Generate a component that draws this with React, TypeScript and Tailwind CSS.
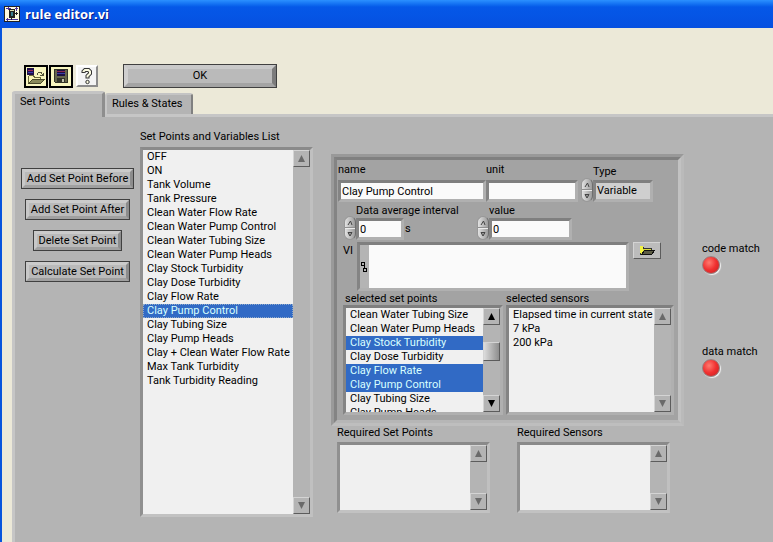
import { useState } from 'react'
import type { ReactNode } from 'react'

const setPoints = [
  'OFF',
  'ON',
  'Tank Volume',
  'Tank Pressure',
  'Clean Water Flow Rate',
  'Clean Water Pump Control',
  'Clean Water Tubing Size',
  'Clean Water Pump Heads',
  'Clay Stock Turbidity',
  'Clay Dose Turbidity',
  'Clay Flow Rate',
  'Clay Pump Control',
  'Clay Tubing Size',
  'Clay Pump Heads',
  'Clay + Clean Water Flow Rate',
  'Max Tank Turbidity',
  'Tank Turbidity Reading',
]

const visibleSetPoints = setPoints.slice(6, 14)
const sensors = ['Elapsed time in current state', '7 kPa', '200 kPa']

// recessed LabVIEW frame: dark on the top and left, light on the bottom and right
const sunken = 'border-3 border-t-[#8a8a8a] border-l-[#909090] border-r-[#c0c0c0] border-b-[#c2c2c2]'
const sunkenDark = 'border-3 border-t-[#7f7f7f] border-l-[#848484] border-r-[#b0b0b0] border-b-[#b0b0b0]'
const raised = 'border border-t-[#d4d4d4] border-l-[#d4d4d4] border-r-[#5c5c5c] border-b-[#5c5c5c]'

function ScrollButton({ dir, active }: { dir: 'up' | 'down'; active?: boolean }) {
  return (
    <button
      aria-label={`Scroll ${dir}`}
      className={`flex h-[17px] w-[17px] shrink-0 items-center justify-center bg-[#b4b4b4] ${raised}`}
    >
      <svg width="7" height="7" viewBox="0 0 7 7" className={active ? 'fill-black' : 'fill-[#6a6a6a]'}>
        {dir === 'up' ? <path d="M3.500 0L7 7H0Z" /> : <path d="M0 0H7L3.500 7Z" />}
      </svg>
    </button>
  )
}

type ListBoxProps = {
  label: string
  items?: string[]
  selected?: string[]
  focused?: boolean
  thumb?: boolean
  dark?: boolean
  className: string
  onSelect?: (item: string) => void
}

function ListBox({ label, items = [], selected = [], focused, thumb, dark, className, onSelect }: ListBoxProps) {
  return (
    <div className={`flex ${dark ? sunkenDark : sunken} ${className}`}>
      <ul role="listbox" aria-label={label} className="min-w-0 flex-1 overflow-hidden bg-[#f0f0f0]">
        {items.map((item) => {
          const on = selected.includes(item)
          return (
            <li
              key={item}
              role="option"
              aria-selected={on}
              onClick={() => onSelect?.(item)}
              className={`h-[14px] pl-1 leading-[14px] whitespace-nowrap ${
                on ? 'bg-[#316ac5] text-[#d8ffff]' : ''
              } ${on && focused ? 'outline outline-dotted -outline-offset-1 outline-[#8fa9c9]' : ''}`}
            >
              {item}
            </li>
          )
        })}
      </ul>
      <div className="flex w-[17px] flex-col bg-[#b4b4b4]">
        <ScrollButton dir="up" active={thumb} />
        <div className="flex-1">
          {thumb && (
            <div className={`mt-[17px] h-[19px] bg-linear-to-r from-[#dcdcdc] to-[#8e8e8e] ${raised}`} />
          )}
        </div>
        <ScrollButton dir="down" active={thumb} />
      </div>
    </div>
  )
}

function Spinner({ label }: { label: string }) {
  return (
    <div className="flex h-6 w-3 shrink-0 flex-col items-center justify-center rounded-full border border-[#989898] border-r-[#6e6e6e] bg-linear-to-r from-[#e2e2e2] to-[#9c9c9c]">
      <button aria-label={`Increase ${label}`} className="flex h-[10px] w-full items-center justify-center border-b border-[#909090]">
        <svg width="6" height="6" viewBox="0 0 6 6" className="fill-none stroke-[#444]">
          <path d="M1 5L3.500 1L5 5" />
        </svg>
      </button>
      <button aria-label={`Decrease ${label}`} className="flex h-[10px] w-full items-center justify-center border-t border-[#ececec]">
        <svg width="6" height="6" viewBox="0 0 6 6" className="fill-[#999] stroke-[#444]">
          <path d="M1 1.500H5L3 5Z" />
        </svg>
      </button>
    </div>
  )
}

function GrayButton({ children }: { children: ReactNode }) {
  return (
    <button className="border border-[#404040] bg-[#bababa]">
      <span className="block border-3 border-t-[#cbcbcb] border-l-[#c8c8c8] border-r-[#8c8c8c] border-b-[#a0a0a0] px-0.5 leading-[13px] whitespace-nowrap">
        {children}
      </span>
    </button>
  )
}

function Led({ label }: { label: string }) {
  return (
    <div>
      <div className="leading-[14px]">{label}</div>
      <div
        role="img"
        aria-label={`${label}: off`}
        className="h-[18px] w-[18px] rounded-full border border-[#9a8080] bg-radial-[at_38%_35%] from-[#ff7a70] via-[#f03030] to-[#c02020] shadow-[1px_1px_1px_#f4f4f4]"
      />
    </div>
  )
}

function AppIcon() {
  return (
    <svg width="16" height="16" viewBox="0 0 16 16" shapeRendering="crispEdges">
      <path fill="#fffbe0" stroke="#222" d="M0.500 0.500H15.500V15.500H0.500Z" />
      <path fill="none" stroke="#4a2f9c" d="M2 2.500H7M4.500 1V4M11 2.500H14M12.500 1V5M2 13.500H14M3.500 12V15" />
      <path fill="#222" d="M5 3H11V12H5Z" />
      <path fill="#e0e0b0" d="M6 4H10V5H6Z" />
      <path fill="#3c7f90" d="M7 6H9V10H7Z" />
      <path stroke="#222" d="M11 7.500H14M12.500 6V9M7.500 12V14" />
    </svg>
  )
}

function LoadIcon() {
  return (
    <svg width="20" height="19" viewBox="0 0 20 19" shapeRendering="crispEdges">
      <path fill="#20104c" d="M1 1H8V8H1Z" />
      <path stroke="#a02858" d="M2 3.500H7" />
      <path stroke="#3c3cb0" d="M2 5.500H7" />
      <path stroke="#333" d="M4.500 8V9" />
      <path fill="#f8f5b4" stroke="#6a6a3a" d="M2.500 16.500V9.500L3.500 8.500H7.500L8.500 10.500H14.500V12.500" />
      <path fill="#8a8a5c" stroke="#4a4a2c" d="M2.500 16.500L6.500 12.500H18.500L14.500 16.500Z" />
      <path fill="none" stroke="#55553a" d="M11 7.500L12.500 5.500H15.500L16.500 8.500M14 8.500H17.500M17.500 6V9" />
    </svg>
  )
}

function SaveIcon() {
  return (
    <svg width="20" height="19" viewBox="0 0 20 19" shapeRendering="crispEdges">
      <path fill="#66664c" stroke="#33332a" d="M3.500 2.500H16.500V15.500H4.500L3.500 14.500Z" />
      <path fill="#1c1040" d="M6 3H14V9H6Z" />
      <path stroke="#8c2850" d="M6 4.500H14" />
      <path stroke="#3c3ca8" d="M6 6.500H14" />
      <path fill="#33332a" d="M6 11H14V15H6Z" />
      <path fill="#c4c4b0" d="M11 12H13V15H11Z" />
    </svg>
  )
}

function HelpIcon() {
  return (
    <svg width="14" height="18" viewBox="0 0 14 18" fill="none">
      <path stroke="#333" strokeWidth="4" d="M3.500 6V4.500L5 3H8.500L10 4.500V6.500L7.500 9V11.500" />
      <path stroke="#fafae0" strokeWidth="2" d="M3.500 5V4.500L5 3H8.500L10 4.500V6.500L7.500 9V10.500" />
      <circle cx="7.500" cy="15" r="1.700" fill="#fafae0" stroke="#333" />
    </svg>
  )
}

function FolderIcon() {
  return (
    <svg width="16" height="11" viewBox="0 0 16 11" shapeRendering="crispEdges">
      <path fill="#d8d840" stroke="#333" d="M1.500 9.500V1.500H3.500L4.500 3.500H12.500V5.500" />
      <path fill="#f4f440" d="M1 1H4V8H1Z" />
      <path fill="#5c5c44" stroke="#111" d="M2.500 9.500L5.500 5.500H15.500L12.500 9.500Z" />
    </svg>
  )
}

export default function App() {
  const [tab, setTab] = useState('points')
  const [current, setCurrent] = useState('Clay Pump Control')
  const [picked, setPicked] = useState(['Clay Stock Turbidity', 'Clay Flow Rate', 'Clay Pump Control'])

  const togglePicked = (item: string) =>
    setPicked((p) => (p.includes(item) ? p.filter((i) => i !== item) : [...p, item]))

  return (
    <div className="flex min-h-screen flex-col overflow-hidden bg-[#ece9d8] font-['Roboto',sans-serif] text-[11px] text-black">
      <header className="flex h-7 shrink-0 items-center gap-[5px] bg-linear-to-b from-[#2b90ff] via-[#0558e8] via-25% to-[#0650e0] pl-1 text-white">
        <AppIcon />
        <h1 className="pt-0.5 font-['Open_Sans',sans-serif] text-[13px] font-bold [text-shadow:1px_1px_#0a1883]">rule editor.vi</h1>
      </header>

      <main className="flex flex-1 flex-col border-l-2 border-[#0855dd] pt-9 pl-[10px]">
        <div className="flex items-center gap-px pl-3">
          <button aria-label="Load" className="border-2 border-black bg-[#f8f6c0]">
            <LoadIcon />
          </button>
          <button aria-label="Save" className="border-2 border-black bg-[#f8f6c0]">
            <SaveIcon />
          </button>
          <button aria-label="Help" className="ml-0.5 flex h-[22px] w-[22px] items-center justify-center border-2 border-t-white border-l-white border-r-[#8c8c8c] border-b-[#8c8c8c] bg-[#f4f4f4]">
            <HelpIcon />
          </button>
          <button className="ml-6 w-[154px] border border-[#404040] bg-[#bababa]">
            <span className="block border-4 border-t-[#c9c9c9] border-l-[#cfcfcf] border-r-[#7c7c7c] border-b-[#a4a4a4] leading-[14px]">OK</span>
          </button>
        </div>

        <div role="tablist" className="mt-[3px] flex h-[23px] items-end">
          <button
            role="tab"
            aria-selected={tab === 'points'}
            onClick={() => setTab('points')}
            className="relative z-10 -mb-[3px] flex h-[26px] w-[93px] items-start rounded-t-[3px] border-3 border-b-0 border-t-[#c4c4c4] border-l-[#c6c6c6] border-r-[#8e8e8e] bg-[#b4b4b4] pl-[5px] leading-[16px]"
          >
            Set Points
          </button>
          <button
            role="tab"
            aria-selected={tab === 'rules'}
            onClick={() => setTab('rules')}
            className="flex h-[21px] w-[88px] items-start rounded-t-[3px] border-2 border-b-0 border-t-[#c4c4c4] border-l-[#c6c6c6] border-r-[#808080] bg-[#b4b4b4] pl-[5px] leading-[18px] whitespace-nowrap"
          >
            Rules &amp; States
          </button>
        </div>

        <section className="flex flex-1 items-start border-t-3 border-l-3 border-[#c6c6c6] bg-[#b4b4b4] pt-[14px] pb-6">
          <div className="mt-[37px] ml-[7px] flex w-[111px] shrink-0 flex-col items-center gap-[10px]">
            <GrayButton>Add Set Point Before</GrayButton>
            <GrayButton>Add Set Point After</GrayButton>
            <GrayButton>Delete Set Point</GrayButton>
            <GrayButton>Calculate Set Point</GrayButton>
          </div>

          <div className="ml-[7px] w-[173px] shrink-0">
            <div className="h-4 leading-[12px]">Set Points and Variables List</div>
            <ListBox
              label="Set Points and Variables List"
              items={setPoints}
              selected={[current]}
              focused
              className="h-[370px]"
              onSelect={setCurrent}
            />
          </div>

          <div className="mt-[23px] ml-[18px] w-[353px] shrink-0">
            <div className="border-3 border-t-[#999999] border-l-[#9a9a9a] border-r-[#bababa] border-b-[#bebebe]">
              <div className="border-3 border-t-[#808080] border-l-[#848484] border-r-[#c2c2c2] border-b-[#b6b6b6] bg-[#a3a3a3] pt-1 pb-[5px]">
                <div className="flex items-end pl-px">
                  <div>
                    <label htmlFor="name" className="block h-4 leading-[12px]">name</label>
                    <input id="name" defaultValue="Clay Pump Control" className={`block h-[22px] w-[148px] bg-[#fafafa] pl-px outline-none ${sunkenDark}`} />
                  </div>
                  <div>
                    <label htmlFor="unit" className="block h-4 leading-[12px]">unit</label>
                    <input id="unit" className={`block h-[22px] w-[92px] bg-[#fafafa] pl-px outline-none ${sunkenDark}`} />
                  </div>
                  <div className="ml-[3px] flex items-end">
                    <Spinner label="type" />
                    <div>
                      <label htmlFor="type" className="block h-[14px] leading-[12px]">Type</label>
                      <select id="type" className={`block h-[22px] w-[60px] appearance-none bg-[#cfcfcf] pl-px outline-none ${sunkenDark}`}>
                        <option>Variable</option>
                        <option>Constant</option>
                      </select>
                    </div>
                  </div>
                </div>

                <div className="mt-[3px] flex items-end pl-[7px]">
                  <Spinner label="data average interval" />
                  <div className="w-[121px]">
                    <label htmlFor="interval" className="block h-[13px] leading-[12px] whitespace-nowrap">Data average interval</label>
                    <div className="flex items-center gap-px">
                      <input id="interval" defaultValue="0" className={`h-[22px] w-[48px] bg-[#fafafa] pl-px outline-none ${sunkenDark}`} />
                      s
                    </div>
                  </div>
                  <Spinner label="value" />
                  <div>
                    <label htmlFor="value" className="block h-[13px] leading-[12px]">value</label>
                    <input id="value" defaultValue="0" className={`block h-[22px] w-[83px] bg-[#fafafa] pl-px outline-none ${sunkenDark}`} />
                  </div>
                </div>

                <div className="mt-0.5 flex items-start pl-[6px]">
                  <label htmlFor="vi" className="w-[14px] pt-0.5 leading-[14px]">VI</label>
                  <div className={`flex h-[49px] w-[272px] ${sunkenDark}`}>
                    <div className="flex w-[9px] items-center justify-center bg-[#b4b4b4]">
                      <svg width="7" height="10" viewBox="0 0 7 10" shapeRendering="crispEdges" className="fill-none stroke-black">
                        <path d="M0.500 0.500H3.500V3.500H0.500ZM2.500 6.500H5.500V9.500H2.500ZM3.500 3.500V6.500" />
                      </svg>
                    </div>
                    <textarea id="vi" className="min-w-0 flex-1 resize-none bg-[#fafafa] outline-none" />
                  </div>
                  <button aria-label="Browse" className={`ml-1 flex h-[17px] w-7 items-center justify-center bg-[#bcbcbc] ${raised}`}>
                    <FolderIcon />
                  </button>
                </div>

                <div className="mt-0.5 flex gap-[3px] pl-[6px]">
                  <div className="w-[160px]">
                    <div className="h-[12px] pl-0.5 leading-[12px]">selected set points</div>
                    <ListBox
                      label="selected set points"
                      items={visibleSetPoints}
                      selected={picked}
                      thumb
                      dark
                      className="h-[110px]"
                      onSelect={togglePicked}
                    />
                  </div>
                  <div className="w-[168px]">
                    <div className="h-[12px] leading-[12px]">selected sensors</div>
                    <ListBox label="selected sensors" items={sensors} dark className="h-[110px]" />
                  </div>
                </div>
              </div>
            </div>

            <div className="flex gap-[27px] pl-[6px]">
              <div className="w-[153px]">
                <div className="h-4 leading-[14px]">Required Set Points</div>
                <ListBox label="Required Set Points" className="h-[71px]" />
              </div>
              <div className="w-[153px]">
                <div className="h-4 leading-[14px]">Required Sensors</div>
                <ListBox label="Required Sensors" className="h-[71px]" />
              </div>
            </div>
          </div>

          <div className="mt-[111px] ml-[18px] flex shrink-0 flex-col gap-[71px]">
            <Led label="code match" />
            <Led label="data match" />
          </div>
        </section>
      </main>
    </div>
  )
}
